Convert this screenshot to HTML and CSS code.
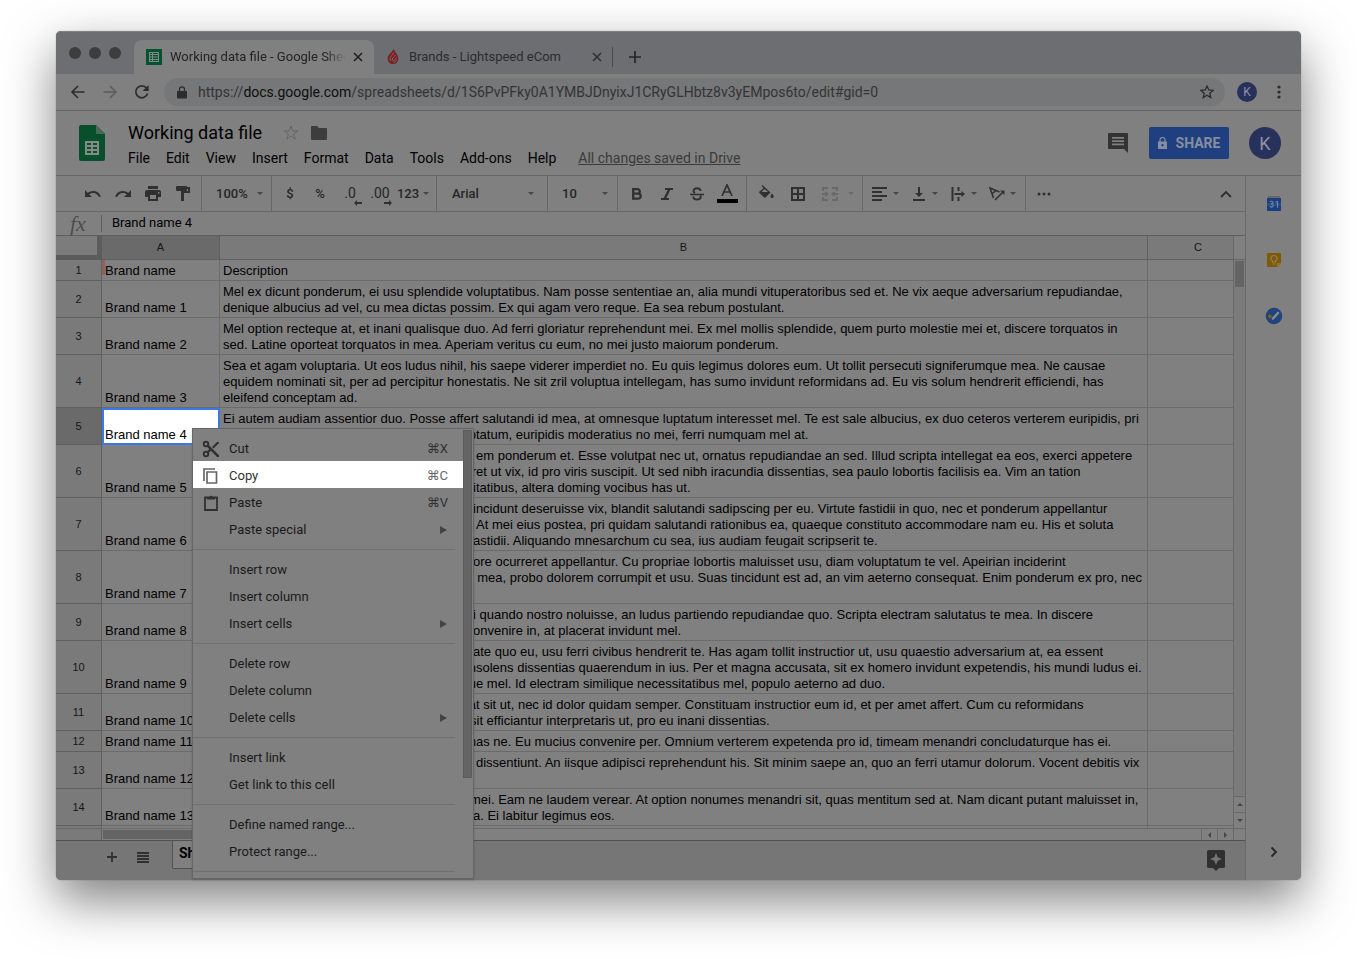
FILE: index.html
```html
<!DOCTYPE html>
<html lang="en">
<head>
<meta charset="utf-8">
<title>Working data file - Google Sheets</title>
<link rel="stylesheet" href="styles.css">
</head>
<body>
<div class="window">
  <div class="tabstrip">
    <div class="lights"><span></span><span></span><span></span></div>
    <div class="tab tab-active">
      <svg class="fav" width="16" height="16" viewBox="0 0 16 16"><path fill="#06512f" d="M0 0h16v16H0z"/><path fill="#7f8a83" fill-rule="evenodd" d="M3 3h10v10H3zM4 4v1h2V4zM7 4v1h5V4zM4 6v1.500h2V6zM7 6v1.500h5V6zM4 8.500V10h2V8.500zM7 8.500V10h5V8.500zM4 11v1h2v-1zM7 11v1h5v-1z"/></svg>
      <span class="tab-title">Working data file - Google Sheets</span>
      <button class="tab-close" aria-label="Close tab"><svg width="10" height="10" viewBox="0 0 10 10"><path d="M1 1l8 8M9 1L1 9" stroke="#1e1f21" stroke-width="1.500"/></svg></button>
    </div>
    <div class="tab tab-idle">
      <svg class="fav" width="12" height="16" viewBox="0 0 12 16"><path fill="#7c2024" d="M6.500 0c.8 2.200 4.800 5.500 4.800 9.500a5.200 5.200 0 0 1-5.300 5.500A5.200 5.200 0 0 1 .7 9.500C.7 5.500 5 3.500 6.500 0z"/><path fill="none" stroke="#6d6e72" stroke-width="1" d="M6.800 3.500C6 6 3 7.300 3 9.800c0 1 .5 1.800 1.200 2.200M8.500 6C8 7.500 5.200 8.500 5.200 10.300c0 .8.400 1.200.9 1.200 1.500 0 3-1.500 3.200-3M6.500 13.300c1.300 0 2.500-1 3-2.200"/></svg>
      <span class="tab-title">Brands - Lightspeed eCom</span>
      <button class="tab-close" aria-label="Close tab"><svg width="10" height="10" viewBox="0 0 10 10"><path d="M1 1l8 8M9 1L1 9" stroke="#2c2e30" stroke-width="1.500"/></svg></button>
    </div>
    <button class="tab-new" aria-label="New tab"><svg width="12" height="12" viewBox="0 0 12 12"><path d="M6 0v12M0 6h12" stroke="#242628" stroke-width="1.700"/></svg></button>
  </div>

  <div class="navbar">
    <button class="nav-btn" aria-label="Back"><svg width="16" height="16" viewBox="0 0 16 16"><path d="M14.500 8H2M8 2 2 8l6 6" fill="none" stroke="#2b2c2e" stroke-width="1.600"/></svg></button>
    <button class="nav-btn" aria-label="Forward"><svg width="16" height="16" viewBox="0 0 16 16"><path d="M1.500 8H14M8 2l6 6-6 6" fill="none" stroke="#5b5c5d" stroke-width="1.600"/></svg></button>
    <button class="nav-btn" aria-label="Reload"><svg width="16" height="16" viewBox="0 0 16 16"><path d="M13.600 9.500A6 6 0 1 1 12.500 4" fill="none" stroke="#2b2c2e" stroke-width="1.700"/><path fill="#2b2c2e" d="M14.600 1v6h-6z"/></svg></button>
    <div class="omnibox">
      <svg width="10" height="13" viewBox="0 0 10 13"><path fill="#2b2c2e" d="M1 5h8a1 1 0 0 1 1 1v5.500a1 1 0 0 1-1 1H1a1 1 0 0 1-1-1V6a1 1 0 0 1 1-1z"/><path d="M2.500 5.500V3.300a2.500 2.500 0 0 1 5 0v2.200" fill="none" stroke="#2b2c2e" stroke-width="1.300"/></svg>
      <div class="url" role="textbox" aria-label="Address">https://<b>docs.google.com</b>/spreadsheets/d/1S6PvPFky0A1YMBJDnyixJ1CRyGLHbtz8v3yEMpos6to/edit#gid=0</div>
      <svg width="14" height="14" viewBox="0 0 14 14"><path d="M7 1l1.800 4 4.300.4-3.300 2.900 1 4.300L7 10.300l-3.800 2.300 1-4.300L.9 5.400 5.200 5z" fill="none" stroke="#2b2c2e" stroke-width="1.300"/></svg>
    </div>
    <button class="avatar avatar-sm">K</button>
    <button class="kebab" aria-label="Browser menu"><svg width="4" height="14" viewBox="0 0 4 14"><g fill="#2b2c2e"><circle cx="2" cy="2" r="1.600"/><circle cx="2" cy="7" r="1.600"/><circle cx="2" cy="12" r="1.600"/></g></svg></button>
  </div>

  <header class="doc-head">
    <svg class="doc-logo" width="26" height="36" viewBox="0 0 26 36"><path fill="#084f2c" d="M2 0h15l9 9v25a2 2 0 0 1-2 2H2a2 2 0 0 1-2-2V2a2 2 0 0 1 2-2z"/><path fill="#47695a" d="M17 0l9 9h-9z"/><path fill="#828a85" fill-rule="evenodd" d="M6 16h14v14H6zM8 18v2h4v-2zM14 18v2h4v-2zM8 22v2h4v-2zM14 22v2h4v-2zM8 26v2h4v-2zM14 26v2h4v-2z"/></svg>
    <div class="doc-main">
      <div class="doc-title-row">
        <h1>Working data file</h1>
        <button aria-label="Star"><svg width="16" height="16" viewBox="0 0 16 16"><path d="M8 1l1.700 4.900h5.200l-4.200 3.100 1.600 5.100L8 11l-4.300 3.100L5.300 9 1.100 5.900h5.200z" fill="none" stroke="#676767"/></svg></button>
        <button aria-label="Move to folder"><svg width="16" height="14" viewBox="0 0 16 14"><path fill="#3d3d3d" d="M1 0h5l2 2h7a1 1 0 0 1 1 1v10a1 1 0 0 1-1 1H1a1 1 0 0 1-1-1V1a1 1 0 0 1 1-1z"/></svg></button>
      </div>
      <nav class="menubar">
        <button>File</button><button>Edit</button><button>View</button><button>Insert</button><button>Format</button><button>Data</button><button>Tools</button><button>Add-ons</button><button>Help</button>
        <a href="#">All changes saved in Drive</a>
      </nav>
    </div>
    <button class="comment" aria-label="Comments"><svg width="20" height="20" viewBox="0 0 20 20"><path fill="#333" fill-rule="evenodd" d="M1 0h18a1 1 0 0 1 1 1v19l-4-4H1a1 1 0 0 1-1-1V1a1 1 0 0 1 1-1zM4 4v1.800h12V4zM4 7.200V9h12V7.200zM4 10.400v1.800h12v-1.800z"/></svg></button>
    <button class="share"><svg width="9" height="12" viewBox="0 0 9 12"><path fill="#858f9f" fill-rule="evenodd" d="M0 4.500h9V12H0zM4.500 7a1.200 1.200 0 1 0 .01 0z"/><path d="M2 5V3a2.500 2.500 0 0 1 5 0v2" fill="none" stroke="#858f9f" stroke-width="1.200"/></svg>SHARE</button>
    <button class="avatar avatar-lg">K</button>
  </header>

  <div class="work">
    <main class="sheet">
      <div class="toolbar">
        <div class="group g-history">
          <button aria-label="Undo"><svg width="16" height="8" viewBox="0 0 16 8"><path fill="#303030" d="M0 0v7h7L4.300 4.400C5.400 3.500 6.700 3 8.200 3c2.600 0 4.800 1.700 5.700 4l1.900-.6C14.700 3.200 11.800 1 8.200 1 6.200 1 4.400 1.700 2.900 2.900z"/></svg></button>
          <button aria-label="Redo"><svg width="16" height="8" viewBox="0 0 16 8"><path fill="#303030" d="M16 0v7H9l2.700-2.600C10.600 3.500 9.300 3 7.800 3 5.200 3 3 4.700 2.100 7L.2 6.400C1.300 3.200 4.200 1 7.800 1c2 0 3.800.7 5.300 1.900z"/></svg></button>
          <button aria-label="Print"><svg width="16" height="15" viewBox="0 0 16 15"><path fill="#303030" fill-rule="evenodd" d="M3 0h10v3H3zM2 4h12a2 2 0 0 1 2 2v5h-3v4H3v-4H0V6a2 2 0 0 1 2-2zM5 9v4h6V9zM13 6v1.500h1.500V6z"/></svg></button>
          <button aria-label="Paint format"><svg width="14" height="15" viewBox="0 0 14 15"><path fill="#303030" d="M1 0h9a1 1 0 0 1 1 1h3v6H8v8H5V5h7V3h-1v1a1 1 0 0 1-1 1H1a1 1 0 0 1-1-1V1a1 1 0 0 1 1-1z"/></svg></button>
        </div>
        <div class="group g-zoom"><select aria-label="Zoom"><option>100%</option></select><i class="caret"></i></div>
        <div class="group g-number">
          <button>$</button><button>%</button>
          <button class="dec" aria-label="Decrease decimal places"><span>.0</span><svg width="8" height="6" viewBox="0 0 8 6"><path fill="#303030" d="M0 3l3-3v2h5v2H3v2z"/></svg></button>
          <button class="dec" aria-label="Increase decimal places"><span>.00</span><svg width="8" height="6" viewBox="0 0 8 6"><path fill="#303030" d="M8 3L5 0v2H0v2h5v2z"/></svg></button>
          <button class="more-formats">123<i class="caret"></i></button>
        </div>
        <div class="group g-font"><select aria-label="Font"><option>Arial</option></select><i class="caret"></i></div>
        <div class="group g-size"><select aria-label="Font size"><option>10</option></select><i class="caret"></i></div>
        <div class="group g-style">
          <button aria-label="Bold"><svg width="11" height="12" viewBox="0 0 11 12"><path fill="none" stroke="#303030" stroke-width="2.300" d="M1.200 1.200h4.300a2.200 2.200 0 0 1 0 4.500H1.200zM1.200 5.700h5a2.500 2.500 0 0 1 0 5h-5z"/></svg></button>
          <button aria-label="Italic"><svg width="12" height="12" viewBox="0 0 12 12"><path fill="#303030" d="M4 0h8v2H9.300L5.300 10H8v2H0v-2h2.700l4-8H4z"/></svg></button>
          <button aria-label="Strikethrough"><svg width="14" height="14" viewBox="0 0 14 14"><path stroke="#303030" stroke-width="1.600" d="M0 7.500h14"/><path fill="none" stroke="#303030" stroke-width="1.900" d="M10.500 4C10.500 2 9 1.200 7 1.200S3.500 2.200 3.500 4c0 1 .7 1.600 1.500 2M3.300 9.500c0 2 1.600 3 3.700 3s3.700-.9 3.700-2.800c0-.6-.2-1-.5-1.300"/></svg></button>
          <button class="text-color" aria-label="Text color"><svg width="12" height="12" viewBox="0 0 12 12"><path fill="none" stroke="#303030" stroke-width="1.700" d="M1 12L6 .8 11 12M2.700 8h6.600"/></svg><span></span></button>
        </div>
        <div class="group g-cell">
          <button aria-label="Fill color"><svg class="raise" width="15" height="14" viewBox="0 0 15 14"><path fill="#303030" fill-rule="evenodd" d="M3.500 0l8 7.500-5 5a1 1 0 0 1-1.400 0L.5 8a1 1 0 0 1 0-1.400L4.700 3 2.500 1zM5.700 4L2.500 7h6.500zM13 8.500s1.700 1.800 1.700 3a1.600 1.600 0 0 1-3.200 0c0-1.200 1.500-3 1.500-3z"/></svg></button>
          <button aria-label="Borders"><svg width="14" height="14" viewBox="0 0 14 14"><path fill="none" stroke="#303030" stroke-width="2" d="M1 1h12v12H1zM7 1v12M1 7h12"/></svg></button>
          <button aria-label="Merge cells"><svg width="16" height="14" viewBox="0 0 16 14"><path fill="none" stroke="#696969" stroke-width="1.800" d="M1 4V1h5M10 1h5v3M15 10v3h-5M6 13H1v-3M0 7h5M16 7h-5M3.500 5l2 2-2 2M12.500 5l-2 2 2 2"/></svg></button><i class="caret caret-off"></i>
        </div>
        <div class="group g-align">
          <button aria-label="Horizontal align"><svg width="16" height="14" viewBox="0 0 16 14"><path stroke="#303030" stroke-width="1.800" d="M0 1h15M0 5h10M0 9h15M0 13h10"/></svg><i class="caret"></i></button>
          <button aria-label="Vertical align"><svg width="14" height="14" viewBox="0 0 14 14"><path fill="#303030" d="M6 0h2v6h3l-4 4-4-4h3zM1 12h12v2H1z"/></svg><i class="caret"></i></button>
          <button aria-label="Text wrapping"><svg width="15" height="14" viewBox="0 0 15 14"><path fill="#303030" d="M1 0h2v14H1zM7 0h2v4H7zM7 10h2v4H7zM4 6h7V4l3.500 3L11 10V8H4z"/></svg><i class="caret"></i></button>
          <button aria-label="Text rotation"><svg width="16" height="14" viewBox="0 0 16 14"><path fill="none" stroke="#303030" stroke-width="1.600" d="M4.500 11L1 1l9.500 4M2.800 7L7 3.500M6 13l8-8"/><path fill="#303030" d="M11 3.500h4.500V8z"/></svg><i class="caret"></i></button>
        </div>
        <div class="group g-more">
          <button aria-label="More"><svg width="14" height="4" viewBox="0 0 14 4"><g fill="#303030"><circle cx="2" cy="2" r="1.500"/><circle cx="7" cy="2" r="1.500"/><circle cx="12" cy="2" r="1.500"/></g></svg></button>
          <button aria-label="Hide the menus"><svg width="12" height="8" viewBox="0 0 12 8"><path d="M1 7l5-5 5 5" fill="none" stroke="#303030" stroke-width="1.900"/></svg></button>
        </div>
      </div>

      <label class="formula"><span class="fx">fx</span><input type="text" value="Brand name 4" aria-label="Formula"></label>

      <div class="grid">
        <div class="cells">
          <table>
            <colgroup><col class="c-num"><col class="c-a"><col class="c-b"><col class="c-c"></colgroup>
            <thead><tr><th class="corner"></th><th class="picked">A</th><th>B</th><th class="last">C</th></tr></thead>
            <tbody>
              <tr><th>1</th><td class="flagged">Brand name</td><td>Description</td><td></td></tr>
              <tr><th>2</th><td>Brand name 1</td><td>Mel ex dicunt ponderum, ei usu splendide voluptatibus. Nam posse sententiae an, alia mundi vituperatoribus sed et. Ne vix aeque adversarium repudiandae,<br>denique albucius ad vel, cu mea dictas possim. Ex qui agam vero reque. Ea sea rebum postulant.</td><td></td></tr>
              <tr><th>3</th><td>Brand name 2</td><td>Mel option recteque at, et inani qualisque duo. Ad ferri gloriatur reprehendunt mei. Ex mel mollis splendide, quem purto molestie mei et, discere torquatos in<br>sed. Latine oporteat torquatos in mea. Aperiam veritus cu eum, no mei justo maiorum ponderum.</td><td></td></tr>
              <tr><th>4</th><td>Brand name 3</td><td>Sea et agam voluptaria. Ut eos ludus nihil, his saepe viderer imperdiet no. Eu quis legimus dolores eum. Ut tollit persecuti signiferumque mea. Ne causae<br>equidem nominati sit, per ad percipitur honestatis. Ne sit zril voluptua intellegam, has sumo invidunt reformidans ad. Eu vis solum hendrerit efficiendi, has<br>eleifend conceptam ad.</td><td></td></tr>
              <tr><th class="picked">5</th><td class="active">Brand name 4</td><td>Ei autem audiam assentior duo. Posse affert salutandi id mea, at omnesque luptatum interesset mel. Te est sale albucius, ex duo ceteros verterem euripidis, pri<br><span class="lead lead-l">lup</span>tatum, euripidis moderatius no mei, ferri numquam mel at.</td><td></td></tr>
              <tr><th>6</th><td>Brand name 5</td><td><span class="lead lead-l"></span>em ponderum et. Esse volutpat nec ut, ornatus repudiandae an sed. Illud scripta intellegat ea eos, exerci appetere<br><span class="lead lead-l">r</span>et ut vix, id pro viris suscipit. Ut sed nibh iracundia dissentias, sea paulo lobortis facilisis ea. Vim an tation<br><span class="lead"></span>itatibus, altera doming vocibus has ut.</td><td></td></tr>
              <tr><th>7</th><td>Brand name 6</td><td><span class="lead"></span>incidunt deseruisse vix, blandit salutandi sadipscing per eu. Virtute fastidii in quo, nec et ponderum appellantur<br><span class="lead lead-l"></span>At mei eius postea, pri quidam salutandi rationibus ea, quaeque constituto accommodare nam eu. His et soluta<br><span class="lead">f</span>astidii. Aliquando mnesarchum cu sea, ius audiam feugait scripserit te.</td><td></td></tr>
              <tr><th>8</th><td>Brand name 7</td><td><span class="lead"></span>ore ocurreret appellantur. Cu propriae lobortis maluisset usu, diam voluptatum te vel. Apeirian inciderint<br><span class="lead lead-s"></span>t mea, probo dolorem corrumpit et usu. Suas tincidunt est ad, an vim aeterno consequat. Enim ponderum ex pro, nec<br>&nbsp;</td><td></td></tr>
              <tr><th>9</th><td>Brand name 8</td><td><span class="lead"></span>i quando nostro noluisse, an ludus partiendo repudiandae quo. Scripta electram salutatus te mea. In discere<br><span class="lead">c</span>onvenire in, at placerat invidunt mel.</td><td></td></tr>
              <tr><th>10</th><td>Brand name 9</td><td><span class="lead"></span>ate quo eu, usu ferri civibus hendrerit te. Has agam tollit instructior ut, usu quaestio adversarium at, ea essent<br><span class="lead lead-l">in</span>solens dissentias quaerendum in ius. Per et magna accusata, sit ex homero invidunt expetendis, his mundi ludus ei.<br><span class="lead lead-l">qu</span>e mel. Id electram similique necessitatibus mel, populo aeterno ad duo.</td><td></td></tr>
              <tr><th>11</th><td>Brand name 10</td><td><span class="lead lead-l">a</span>t sit ut, nec id dolor quidam semper. Constituam instructior eum id, et per amet affert. Cum cu reformidans<br><span class="lead lead-s"></span>sit efficiantur interpretaris ut, pro eu inani dissentias.</td><td></td></tr>
              <tr><th>12</th><td>Brand name 11</td><td><span class="lead lead-l">m</span>as ne. Eu mucius convenire per. Omnium verterem expetenda pro id, timeam menandri concludaturque has ei.</td><td></td></tr>
              <tr><th>13</th><td>Brand name 12</td><td><span class="lead lead-l"></span>dissentiunt. An iisque adipisci reprehendunt his. Sit minim saepe an, quo an ferri utamur dolorum. Vocent debitis vix<br>&nbsp;</td><td></td></tr>
              <tr><th>14</th><td>Brand name 13</td><td><span class="lead lead-s"></span>mei. Eam ne laudem verear. At option nonumes menandri sit, quas mentitum sed at. Nam dicant putant maluisset in,<br><span class="lead"></span>a. Ei labitur legimus eos.</td><td></td></tr>
              <tr><th></th><td></td><td></td><td></td></tr>
            </tbody>
          </table>
        </div>
        <div class="vscroll">
          <div class="vtop"></div>
          <div class="vtrack"><div class="vthumb"></div></div>
          <button aria-label="Scroll up"><svg width="6" height="3" viewBox="0 0 6 3"><path fill="#454545" d="M0 3l3-3 3 3z"/></svg></button>
          <button aria-label="Scroll down"><svg width="6" height="3" viewBox="0 0 6 3"><path fill="#454545" d="M0 0l3 3 3-3z"/></svg></button>
        </div>
      </div>
      <div class="hscroll">
        <div class="hhead"></div>
        <div class="htrack"><div class="hthumb"></div></div>
        <button aria-label="Scroll left"><svg width="3" height="6" viewBox="0 0 3 6"><path fill="#454545" d="M3 0L0 3l3 3z"/></svg></button>
        <button aria-label="Scroll right"><svg width="3" height="6" viewBox="0 0 3 6"><path fill="#454545" d="M0 0l3 3-3 3z"/></svg></button>
        <div class="hcorner"></div>
      </div>
      <footer class="sheetbar">
        <button class="add" aria-label="Add sheet"><svg width="10" height="10" viewBox="0 0 10 10"><path d="M5 0v10M0 5h10" stroke="#303030" stroke-width="1.800"/></svg></button>
        <button class="all" aria-label="All sheets"><svg width="12" height="11" viewBox="0 0 12 11"><path stroke="#303030" stroke-width="2" d="M0 1h12M0 4h12M0 7h12M0 10h12"/></svg></button>
        <button class="sheet-tab">Sheet1</button>
        <button class="explore" aria-label="Explore"><svg width="18" height="21" viewBox="0 0 18 21"><path fill="#303030" fill-rule="evenodd" d="M1.500 0h15A1.500 1.500 0 0 1 18 1.500v15a1.500 1.500 0 0 1-1.500 1.500H12l-3 3-3-3H1.500A1.500 1.500 0 0 1 0 16.500v-15A1.500 1.500 0 0 1 1.500 0zM9 3L7.300 7.300 3 9l4.300 1.700L9 15l1.700-4.300L15 9l-4.300-1.700z"/></svg></button>
      </footer>
    </main>

    <aside class="side">
      <button aria-label="Calendar"><svg width="16" height="16" viewBox="0 0 16 16"><path fill="#666" d="M2 0h12v3H2z"/><path fill="#1c3f82" d="M1 2h14v13H1z"/><path fill="#274d94" d="M1 7h14v3H1z"/><path fill="none" stroke="#7b8595" stroke-width="1.100" d="M4 6c.5-1 3-1 3 .6S5 8 5 8s2.300 0 2.200 1.700S4.500 11.500 4 10.300M9.500 6.300L11.500 5.500V11.700"/></svg></button>
      <button aria-label="Keep"><svg width="16" height="16" viewBox="0 0 16 16"><path fill="#7e5a04" d="M2 1h12a1 1 0 0 1 1 1v9l-4 4H2a1 1 0 0 1-1-1V2a1 1 0 0 1 1-1z"/><path fill="#967224" d="M11 11h4l-4 4z"/><path fill="none" stroke="#8b8264" stroke-width="1.200" d="M6.500 10V9C3.500 7 5 3.500 8 3.500S12.500 7 9.500 9v1zM6.500 12h3"/></svg></button>
      <button aria-label="Tasks"><svg width="18" height="18" viewBox="0 0 18 18"><circle cx="9" cy="9" r="8.300" fill="#21437e"/><path stroke="#848b96" stroke-width="2.600" stroke-linecap="round" d="M8 11.500l5-5.500"/><circle cx="5" cy="9.200" r="1.800" fill="#806014"/></svg></button>
      <button class="side-toggle" aria-label="Hide side panel"><svg width="8" height="12" viewBox="0 0 8 12"><path d="M1.500 1.500L6 6l-4.500 4.500" fill="none" stroke="#262626" stroke-width="1.800"/></svg></button>
    </aside>
  </div>

  <div class="ctx" role="menu">
    <button role="menuitem"><svg width="18" height="18" viewBox="0 0 18 18"><path fill="#303030" d="M4.500 6.200L6.200 4.500 17 15.200V17h-2zM10 7l5-5h2v1L11.500 8.500zM4.500 11.800L8 8.500 9.700 10 6.200 13.500z"/><circle cx="4" cy="4" r="2.300" fill="none" stroke="#303030" stroke-width="1.900"/><circle cx="4" cy="14" r="2.300" fill="none" stroke="#303030" stroke-width="1.900"/></svg>Cut<kbd>⌘X</kbd></button>
    <button role="menuitem" class="lit"><svg width="18" height="18" viewBox="0 0 18 18"><path fill="none" stroke="#666" stroke-width="1.700" d="M2 14V2h11M5 5h9.500v11H5z"/></svg>Copy<kbd>⌘C</kbd></button>
    <button role="menuitem"><svg width="18" height="18" viewBox="0 0 18 18"><path fill="none" stroke="#303030" stroke-width="1.800" d="M3 3.500h12v12.500H3z"/><path fill="#303030" d="M5 3h2.300a1.800 1.800 0 0 1 3.400 0H13v2.500H5z"/></svg>Paste<kbd>⌘V</kbd></button>
    <button role="menuitem" class="sub">Paste special<span class="arrow"></span></button>
    <hr>
    <button role="menuitem" class="sub">Insert row</button>
    <button role="menuitem" class="sub">Insert column</button>
    <button role="menuitem" class="sub">Insert cells<span class="arrow"></span></button>
    <hr>
    <button role="menuitem" class="sub">Delete row</button>
    <button role="menuitem" class="sub">Delete column</button>
    <button role="menuitem" class="sub">Delete cells<span class="arrow"></span></button>
    <hr>
    <button role="menuitem" class="sub">Insert link</button>
    <button role="menuitem" class="sub">Get link to this cell</button>
    <hr>
    <button role="menuitem" class="sub">Define named range...</button>
    <button role="menuitem" class="sub">Protect range...</button>
    <hr>
    <span class="ctx-bar"></span>
  </div>
</div>
</body>
</html>
```
FILE: styles.css
```css
* { box-sizing: border-box; }
body {
  margin: 0;
  min-height: 100vh;
  padding: 31px 56px 79px 56px;
  display: flex;
  background: #fff;
  font-family: Roboto, "Liberation Sans", sans-serif;
  font-size: 13px;
  color: #000;
}
button, select, input { font: inherit; color: inherit; border: 0; background: none; padding: 0; margin: 0; }
button { display: flex; align-items: center; justify-content: center; flex: none; white-space: nowrap; }
svg { display: block; flex: none; }

.window {
  position: relative;
  flex: 1;
  min-width: 0;
  display: flex;
  flex-direction: column;
  background: #808080;
  border-radius: 5px;
  box-shadow: 0 20px 50px rgba(0, 0, 0, .5), 0 0 1px rgba(0, 0, 0, .5);
}

/* Browser tabs */
.tabstrip {
  height: 43px;
  display: flex;
  align-items: flex-end;
  background: #6d6e72;
  border-radius: 5px 5px 0 0;
  border-top: 1px solid #7f8481;
}
.lights { display: flex; gap: 8px; padding: 0 13px; align-self: center; width: 78px; }
.lights span { width: 12px; height: 12px; border-radius: 50%; background: #3d3d3e; }
.tab { display: flex; align-items: center; height: 34px; }
.tab-active { width: 240px; background: #808080; border-radius: 8px 8px 0 0; padding: 0 10px 0 12px; }
.tab-idle { width: 239px; padding: 0 9px 0 13px; border-right: 1px solid #48494c; height: 20px; margin-bottom: 7px; }
.tab-title { flex: 1; min-width: 0; overflow: hidden; white-space: nowrap; color: #222325; margin-left: 8px; padding-bottom: 1px; }
.tab-active .tab-title { -webkit-mask-image: linear-gradient(to right, #000 88%, transparent); mask-image: linear-gradient(to right, #000 88%, transparent); }
.tab-idle .tab-title { margin-left: 10px; color: #2a2c2e; }
.tab-close { width: 12px; height: 12px; margin-left: 6px; }
.tab-new { width: 44px; height: 34px; }

/* Address row */
.navbar { height: 37px; display: flex; align-items: center; border-bottom: 1px solid #626364; padding: 0 14px 0 6px; }
.nav-btn { width: 32px; height: 28px; }
.omnibox {
  flex: 1;
  min-width: 0;
  height: 28px;
  margin-left: 6px;
  padding: 0 11px 0 13px;
  display: flex;
  align-items: center;
  border-radius: 14px;
  background: #767778;
}
.url { flex: 1; min-width: 0; overflow: hidden; white-space: nowrap; margin-left: 11px; font-size: 14px; color: #323436; }
.url b { font-weight: 400; color: #0d0e0f; }
.avatar { border-radius: 50%; background: #28305c; color: #8f93a5; }
.avatar-sm { width: 20px; height: 20px; margin-left: 12px; font-size: 12px; }
.kebab { width: 16px; height: 20px; margin-left: 14px; }

/* Document header */
.doc-head { height: 65px; display: flex; align-items: center; padding: 0 20px 0 23px; border-bottom: 1px solid #676767; }
.doc-main { flex: 1; min-width: 0; margin-left: 23px; padding-top: 5px; }
.doc-title-row { display: flex; align-items: center; height: 24px; }
.doc-title-row h1 { margin: 0 21px 0 0; font-size: 18px; font-weight: 400; white-space: nowrap; }
.doc-title-row button { margin-right: 12px; }
.menubar { display: flex; align-items: center; gap: 16px; height: 26px; font-size: 14px; }
.menubar a { margin-left: 6px; color: #3b3b3b; white-space: nowrap; }
.share {
  width: 80px;
  height: 32px;
  gap: 9px;
  margin: 0 20px 0 21px;
  border-radius: 2px;
  background: #1f3f80;
  color: #858f9f;
  font-size: 14px;
  font-weight: 700;
}
.avatar-lg { width: 32px; height: 32px; font-size: 18px; }

.work { flex: 1; min-height: 0; display: flex; }
.sheet { flex: 1; min-width: 0; display: flex; flex-direction: column; }

/* Toolbar */
.toolbar { display: flex; height: 36px; border-bottom: 1px solid #676767; font-weight: 500; color: #262626; }
.group { display: flex; align-items: center; flex: none; border-right: 1px solid #676767; }
.group select { flex: 1; min-width: 0; appearance: none; }
.caret { flex: none; border: 3px solid transparent; border-top-color: #454545; border-bottom: 0; }
.caret-off { border-top-color: #6a6a6a; }
.g-history { width: 146px; padding-left: 22px; }
.g-history button, .g-style button { width: 30px; height: 28px; }
.g-zoom { width: 70px; padding: 0 8px 0 14px; }
.g-number { width: 165px; padding-left: 3px; }
.g-number button { width: 30px; height: 28px; }
.g-number .dec { flex-direction: column; font-weight: 400; font-size: 14px; }
.dec span { line-height: 14px; margin-top: 4px; }
.dec svg { align-self: flex-end; margin-right: 3px; }
.g-number .more-formats { width: 36px; gap: 4px; }
.g-font { width: 111px; padding: 0 13px 0 15px; }
.g-size { width: 70px; padding: 0 9px 0 14px; }
.g-style { width: 129px; padding-left: 4px; }
.text-color { flex-direction: column; gap: 3px; }
.text-color span { width: 21px; height: 4px; background: #000; }
.g-cell { width: 116px; padding-left: 3px; }
.g-cell button { width: 32px; height: 28px; }
.g-cell .raise { margin-bottom: 4px; }
.g-cell .caret { margin-left: 2px; }
.g-align { width: 163px; padding-left: 3px; }
.g-align button { width: 39px; gap: 5px; }
.g-align svg { width: 16px; }
.g-more { flex: 1; justify-content: space-between; border-right: 0; padding: 0 13px 0 11px; }

/* Formula bar */
.formula { height: 24px; display: flex; align-items: center; border-bottom: 1px solid #5f5f5f; }
.fx { width: 46px; height: 17px; line-height: 17px; padding-left: 14px; border-right: 1px solid #5f5f5f; font-family: "Liberation Serif", serif; font-style: italic; font-size: 22px; color: #4d4d4d; }
.formula input { flex: 1; min-width: 0; padding: 0 0 2px 10px; }

/* Cells */
.grid { flex: 1; min-height: 0; display: flex; overflow: hidden; }
.cells { flex: 1 1 0; min-width: 0; height: 592px; overflow: hidden; font-family: "Liberation Sans", Arial, sans-serif; }
table { width: 100%; border-spacing: 0; table-layout: fixed; }
.c-num { width: 46px; }
.c-a { width: 118px; }
.c-b { width: 928px; }
th { height: 21px; padding: 0; font-weight: 400; font-size: 11px; color: #161616; background: #7a7a7a; border-right: 1px solid #606060; border-bottom: 1px solid #606060; }
thead th { height: 24px; padding-bottom: 1px; }
th.picked { background: #6a6a6a; }
th.corner { background: #7c7c7c; border-right: 5px solid #5c5c5c; border-bottom: 5px solid #5c5c5c; }
th.last { padding-left: 15px; border-right: 0; white-space: nowrap; }
td { height: 21px; padding: 3px 3px 1px; line-height: 16px; font-size: 13px; white-space: nowrap; vertical-align: bottom; overflow: hidden; border-right: 1px solid #6b6b6b; border-bottom: 1px solid #6b6b6b; }
td:last-child { border-right: 0; }
.flagged { background: linear-gradient(#93605c, #93605c) 0 0 / 3px 15px no-repeat; }
.active { background: #fff; outline: 2px solid #3b78e7; outline-offset: -2px; }
.lead { display: inline-block; width: 250px; text-align: right; vertical-align: bottom; }
.lead-l { width: 253px; }
.lead-s { width: 247px; }

.vscroll { width: 12px; flex: none; display: flex; flex-direction: column; border-left: 1px solid #696969; }
.vtop { height: 24px; border-bottom: 1px solid #696969; }
.vtrack { flex: 1; background: #7b7b7b; padding: 1px; }
.vthumb { height: 26px; background: #646464; }
.vscroll button { height: 16px; border-top: 1px solid #696969; }

.hscroll { height: 13px; flex: none; display: flex; border-top: 1px solid #696969; border-bottom: 1px solid #515151; }
.hhead { width: 46px; background: #7a7a7a; border-right: 1px solid #606060; }
.htrack { flex: 1; padding: 1px; }
.hthumb { width: 30%; height: 9px; background: #646464; }
.hscroll button { width: 16px; border-left: 1px solid #696969; }
.hcorner { width: 12px; border-left: 1px solid #696969; }

.sheetbar { height: 39px; flex: none; display: flex; align-items: center; background: #767676; border-radius: 0 0 0 5px; padding: 0 20px 0 51px; }
.add { margin: 0 20px 0 0; padding-bottom: 7px; }
.all { margin-right: 23px; padding-bottom: 7px; }
.sheet-tab { width: 72px; height: 28px; align-self: flex-start; justify-content: flex-start; padding: 0 0 3px 6px; background: #808080; border: 1px solid #515151; border-top: 0; border-radius: 0 0 2px 2px; font-weight: 700; font-size: 14px; }
.explore { margin-left: auto; }

/* Side panel */
.side { width: 56px; flex: none; display: flex; flex-direction: column; align-items: center; gap: 38px; padding: 19px 0; border-left: 1px solid #696969; }
.side button { width: 18px; height: 18px; }
.side .side-toggle { margin-top: auto; }

/* Context menu */
.ctx {
  position: absolute;
  left: 136px;
  top: 397px;
  bottom: 1px;
  width: 282px;
  padding: 5px 10px 0 0;
  overflow: hidden;
  background: #808080;
  border: 1px solid #666;
  box-shadow: 0 1px 2px rgba(0, 0, 0, .2);
}
.ctx button { width: 100%; height: 27px; justify-content: flex-start; padding: 2px 15px 0 9px; color: #1a1a1a; }
.ctx button svg { margin-right: 9px; }
.ctx .sub { padding-left: 36px; }
.ctx .lit { background: #fff; color: #333; }
.ctx kbd { margin-left: auto; font-family: Roboto, "DejaVu Sans", sans-serif; font-size: 13px; color: #303030; }
.ctx .lit kbd { color: #666; }
.ctx hr { height: 1px; margin: 7px 8px 5px 0; border: 0; background: #707070; }
.arrow { margin-left: auto; border: 4px solid transparent; border-left: 7px solid #444; border-right: 0; margin-right: 1px; }
.ctx-bar { position: absolute; top: 1px; right: 1px; width: 9px; height: 348px; background: #646464; border: 1px solid #5c5c5c; }
```
